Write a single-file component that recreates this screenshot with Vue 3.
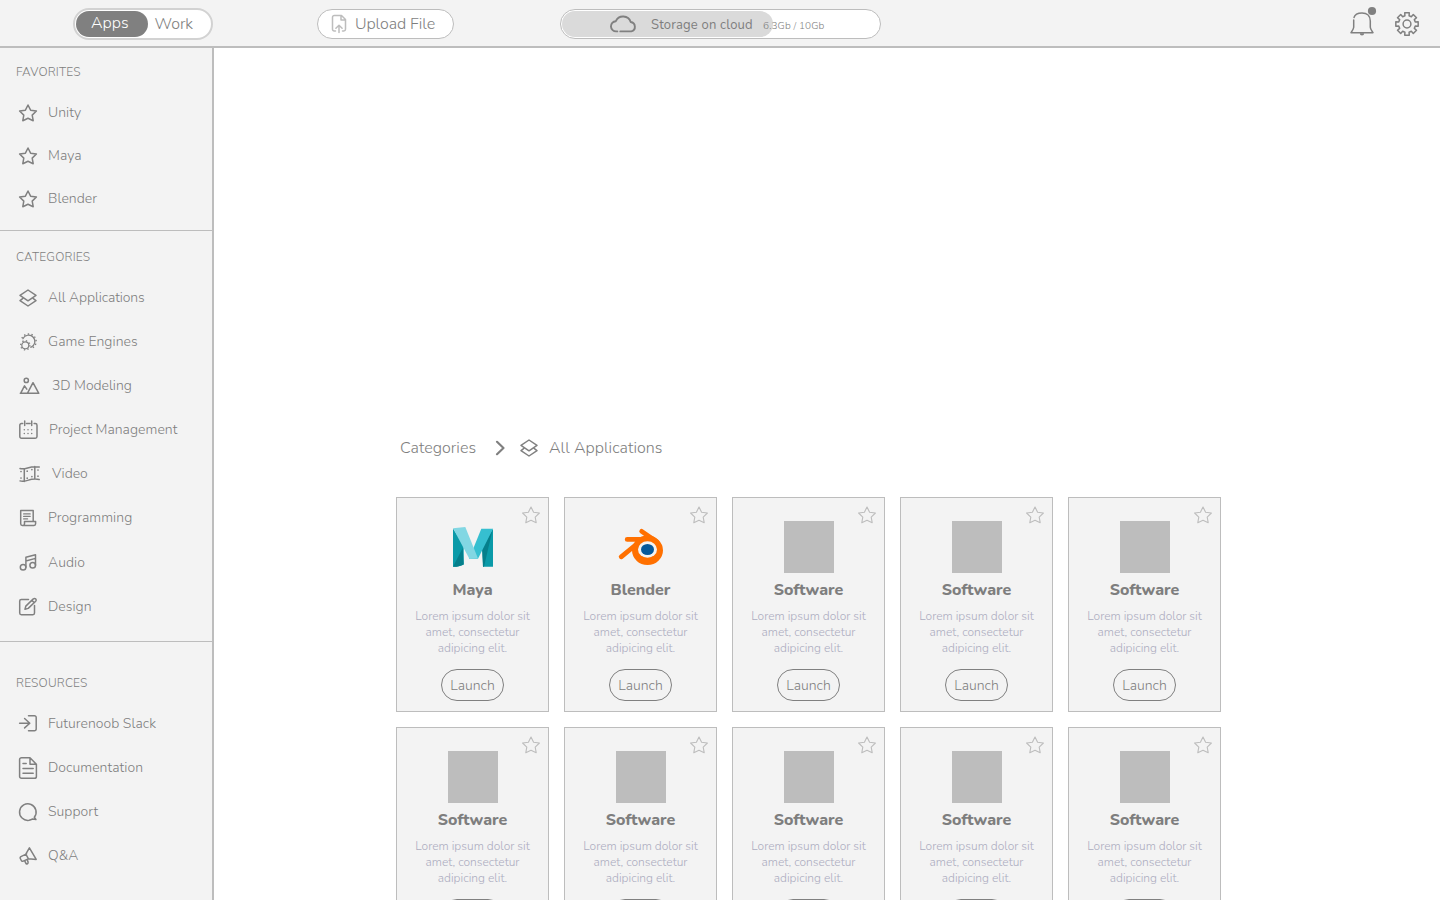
<script setup>
const star = '<path d="M12 5l2.600 5.200 5.800.8-4.200 4.100 1 5.600-5.200-2.400-5.200 2.400 1-5.600L3.600 11l5.800-.8z"/>'
const layers = '<path d="M12 4l8 5.400-8 5.400-8-5.400zM6.600 12.700L4 14.600 12 20l8-5.400-2.600-1.900"/>'

const sections = [
  {
    title: 'Favorites',
    key: 'fav',
    items: [
      { label: 'Unity', icon: star },
      { label: 'Maya', icon: star },
      { label: 'Blender', icon: star }
    ]
  },
  {
    title: 'Categories',
    key: 'cat',
    items: [
      { label: 'All Applications', icon: layers, cls: 'tight' },
      {
        label: 'Game Engines',
        icon: '<g stroke-width="1.200"><circle cx="9.300" cy="15.300" r="3.500"/><path d="M6.900 8.800a6.300 6.300 0 1 1 7.900 8.600"/></g><g stroke-linecap="butt" stroke-width="1.400"><circle cx="9.300" cy="15.300" r="4.600" stroke-dasharray="1.300 2.313"/><path d="M5.900 8.300a7.500 7.500 0 1 1 9.500 10.200" stroke-dasharray="1.400 2.300"/></g>'
      },
      {
        label: '3D Modeling',
        cls: 'wide',
        icon: '<circle cx="10.300" cy="6.400" r="2.100"/><path d="M4.600 19.300l3.900-7.500 2.300 3.400M11.400 19.300L17 8.700l5.800 10.600zM4.300 19.300h8"/>'
      },
      {
        label: 'Project Management',
        cls: 'mid',
        icon: '<path d="M6.700 5.600H5.500a1.700 1.700 0 0 0-1.700 1.700v11.200a1.700 1.700 0 0 0 1.700 1.700h13.800a1.700 1.700 0 0 0 1.700-1.700V7.300a1.700 1.700 0 0 0-1.700-1.700h-1.200M10.500 5.600h3.600M8.700 3v4.500M15.700 3v4.500"/><path d="M8.300 11.800h.01M12 11.800h.01M15.700 11.800h.01M8.300 15.500h.01M12 15.500h.01M15.700 15.500h.01" stroke-width="1.500"/>'
      },
      {
        label: 'Video',
        cls: 'wide',
        icon: '<path d="M4 6.500c6 2 9.500-3.500 19.200-1.400M4 18.900c6 2 9.500-3.500 19.200-1.400M8.300 7.200v12.300M18.800 4.600v12.500"/><path d="M5 9.500v.01M5 16v.01M11.200 9.200v.01M15.900 7.600v.01M11.200 16.200v.01M15.900 14.600v.01M22 8v.01M22 14.200v.01" stroke-width="1.700"/>'
      },
      {
        label: 'Programming',
        icon: '<path d="M17.200 15.300V4.600H4.700v13.200a1.600 1.600 0 0 0 1.600 1.600h11.700a1.600 1.600 0 0 0 1.600-1.600v-2.300H8.500v2.300a1.600 1.600 0 0 1-1.700 1.600"/><path d="M7.600 7.900h6.600M7.600 10.400h6.600M7.600 12.900h4" stroke-width="1.200"/>'
      },
      {
        label: 'Audio',
        cls: 'low',
        icon: '<circle cx="7.100" cy="17.300" r="2.800"/><circle cx="16.700" cy="15.200" r="2.800"/><path d="M9.900 17.300v-10l9.600-2.600v10.500M9.900 11l9.600-2.600"/>'
      },
      {
        label: 'Design',
        cls: 'low',
        icon: '<path d="M12.500 5.500H5.300A1.600 1.600 0 0 0 3.700 7.100v12a1.600 1.600 0 0 0 1.600 1.600h11.600a1.600 1.600 0 0 0 1.600-1.600v-7.600M9 15.300l.8-3.200 7.500-7.200a1.600 1.600 0 0 1 2.400 2.300l-7.500 7.200zM15.800 6.300l2.400 2.300"/>'
      }
    ]
  },
  {
    title: 'Resources',
    key: 'res',
    items: [
      {
        label: 'Futurenoob Slack',
        icon: '<path d="M12.500 3.700h6a1.700 1.700 0 0 1 1.700 1.700v11.700a1.700 1.700 0 0 1-1.700 1.700h-6M3.600 11.200h10.100M8.600 6.500l5.200 4.700-5.200 4.700"/>'
      },
      {
        label: 'Documentation',
        icon: '<path d="M14 1.700H5.500a1.900 1.900 0 0 0-1.900 1.900v16.800a1.900 1.900 0 0 0 1.900 1.900h13a1.900 1.900 0 0 0 1.900-1.900V8.300zM14 1.700v6.600h6.400M7 7.500h3.200M7 12.400h10.200M7 17.300h10.200"/>'
      },
      {
        label: 'Support',
        icon: '<path d="M18.300 17.300a8.300 8.300 0 1 0-5.200 3c1.600-.3 2.700-.9 3.600-1.400l3.200.6z"/>'
      },
      {
        label: 'Q&A',
        icon: '<path d="M13.400 3.800l6.800 11.600-7.700-.6-2.700-4.600zM10.600 9.900l-5.700 2.700a1.400 1.400 0 0 0-.6 1.900l1 2a1.400 1.400 0 0 0 1.900.6l5.500-2.300M8.600 16.600l1.200 2.500a1.200 1.200 0 0 0 2.200-1l-.7-2.600"/>'
      }
    ]
  }
]

const gearPath = (() => {
  const pts = []
  const teeth = 8
  for (let i = 0; i < teeth; i++) {
    const base = (i * 2 * Math.PI) / teeth - Math.PI / 2
    const corners = [[-0.25, 8.500], [-0.2, 11.400], [0.2, 11.400], [0.25, 8.500]]
    for (const [da, r] of corners) {
      pts.push(`${(13 + r * Math.cos(base + da)).toFixed(2)} ${(13 + r * Math.sin(base + da)).toFixed(2)}`)
    }
  }
  return `M${pts.join('L')}Z`
})()

const names = ['Maya', 'Blender', ...Array(8).fill('Software')]
const storage = { used: 6.3, total: 10, fill: '211px' }
</script>

<template>
  <div class="app">
    <header class="topbar">
      <div class="toggle">
        <span class="toggle-on">Apps</span>
        <span class="toggle-off">Work</span>
      </div>
      <button class="upload">
        <svg width="16" height="20" viewBox="0 0 16 20">
          <path d="M4.500 17H3.200A1.700 1.700 0 0 1 1.500 15.300V3.200A1.700 1.700 0 0 1 3.200 1.500h7.300l4 4v9.800a1.700 1.700 0 0 1-1.700 1.700h-1.300M10 1.700V6h4.300M8 18.500v-7M4.900 14.200L8 11.200l3.100 3" />
        </svg>
        <span>Upload File</span>
      </button>
      <div class="storage">
        <div class="storage-fill" :style="{ width: storage.fill }"></div>
        <svg class="cloud" width="28" height="20" viewBox="0 0 28 20">
          <path d="M8.300 17.400H7.300a5.100 5.100 0 0 1-.5-10.200 8 8 0 0 1 14.900.8 4.800 4.800 0 0 1 .6 9.400H11.300" />
        </svg>
        <span class="storage-label">Storage on cloud</span>
        <span class="storage-size">{{ storage.used }}Gb / {{ storage.total }}Gb</span>
      </div>
      <div class="actions">
        <svg width="28" height="32" viewBox="0 0 28 32">
          <path class="line" d="M6 11.500C6.800 8.300 10 6.900 14 6.900c5 0 8.300 3 8.300 8v6.400c0 1.800 1 3 2.700 5.400H3C4.700 24.300 5.700 23.100 5.700 21.300V14" />
          <path class="solid" d="M11.800 27.300h4.400a2.200 2.200 0 0 1-4.400 0z" />
          <circle class="solid" cx="24" cy="5" r="4.100" />
        </svg>
        <svg width="26" height="26" viewBox="0 0 26 26">
          <path class="line" :d="gearPath" />
          <circle class="line" cx="13" cy="13" r="3.900" />
        </svg>
      </div>
    </header>

    <div class="body">
      <aside class="sidebar">
        <section v-for="s in sections" :key="s.key" class="group" :class="s.key">
          <h2>{{ s.title }}</h2>
          <ul>
            <li v-for="item in s.items" :key="item.label" :class="item.cls">
              <svg width="24" height="24" viewBox="0 0 24 24" v-html="item.icon"></svg>
              <span>{{ item.label }}</span>
            </li>
          </ul>
        </section>
      </aside>

      <main class="main">
        <nav class="crumbs">
          <span class="crumb-root">Categories</span>
          <svg class="chevron" width="12" height="18" viewBox="0 0 12 18"><path d="M2 2.800L8.500 9 2 15.200" /></svg>
          <svg class="crumb-icon" width="24" height="24" viewBox="0 0 24 24" v-html="layers"></svg>
          <span>All Applications</span>
        </nav>
        <div class="grid">
          <article v-for="(name, i) in names" :key="i" class="card">
            <svg class="fav-star" width="24" height="24" viewBox="0 0 24 24" v-html="star"></svg>
            <svg v-if="name === 'Maya'" class="logo" width="50" height="52" viewBox="0 0 50 52">
              <path fill="#0a9aa8" d="M5 7.500V45.800C8 46 12 45.500 15.700 43.500V24z" />
              <path fill="#057f8b" d="M5 45.800L14.700 27 15.700 43.500C12 45.500 8 46 5 45.800z" />
              <path fill="#0a9aa8" d="M45 7.700V45.700H35L34.500 24z" />
              <path fill="#057f8b" d="M44.500 9L36 45.700H35L34 28z" />
              <path fill="#36bfd0" d="M33.300 7.700H45L30 37.800 21 38z" />
              <path fill="#82d7e3" d="M5 7.300L17.300 6 30 37.500 21.500 38z" />
            </svg>
            <svg v-else-if="name === 'Blender'" class="logo" width="50" height="52" viewBox="0 0 50 52">
              <path class="arms" d="M25.700 10.400L41 21M11.200 18.400H35M5.200 35.800L22 22" />
              <path fill="#ff7000" d="M20 19h22v10H16.500z" />
              <ellipse cx="31.500" cy="29.300" rx="15.500" ry="14.700" fill="#ff7000" />
              <ellipse cx="31.500" cy="28.500" rx="9.500" ry="8.300" fill="#f3f3f3" />
              <ellipse cx="31.500" cy="28.500" rx="6.500" ry="5.600" fill="#05599b" />
            </svg>
            <div v-else class="logo placeholder"></div>
            <h3>{{ name }}</h3>
            <p>Lorem ipsum dolor sit amet, consectetur adipicing elit.</p>
            <button class="launch">Launch</button>
          </article>
        </div>
      </main>
    </div>
  </div>
</template>

<style>
body {
  margin: 0;
  overflow: hidden;
}
</style>

<style scoped>
.app {
  width: 1440px;
  height: 900px;
  overflow: hidden;
  display: flex;
  flex-direction: column;
  background: #fff;
  color: #7e7e7e;
  font-family: Nunito, Lato, "Open Sans", sans-serif;
  font-size: 14px;
  font-weight: 350;
}
* {
  box-sizing: border-box;
}
svg {
  display: block;
  flex: none;
  overflow: visible;
  fill: none;
  stroke: #808080;
  stroke-width: 1.5;
  stroke-linecap: round;
  stroke-linejoin: round;
}
button {
  font-family: inherit;
  font-weight: inherit;
  color: inherit;
  padding: 0;
}
.topbar {
  height: 48px;
  flex: none;
  display: flex;
  align-items: flex-start;
  background: #f3f3f3;
  border-bottom: 2px solid #bdbdbd;
  font-size: 16px;
}
.toggle {
  margin: 8px 0 0 73px;
  width: 140px;
  height: 32px;
  padding: 1px;
  display: flex;
  border: 2px solid #d2d2d2;
  border-radius: 16px;
  background: #fff;
}
.toggle-on {
  width: 72px;
  height: 26px;
  line-height: 24px;
  padding-left: 15px;
  border-radius: 13px;
  background: #808080;
  color: #fff;
}
.toggle-off {
  line-height: 26px;
  padding-left: 6.500px;
}
.upload {
  margin: 9px 0 0 104px;
  width: 137px;
  height: 30px;
  display: flex;
  align-items: center;
  padding-left: 13px;
  border: 1px solid #bdbdbd;
  border-radius: 15px;
  background: #fff;
  font-size: 16px;
}
.upload svg {
  stroke: #bdbdbd;
  margin-right: 8px;
}
.upload span {
  line-height: 28px;
  letter-spacing: -0.08px;
}
.storage {
  position: relative;
  margin: 9px 0 0 106px;
  width: 321px;
  height: 30px;
  display: flex;
  align-items: center;
  padding-left: 48px;
  border: 1px solid #bdbdbd;
  border-radius: 15px;
  background: #fff;
}
.storage-fill {
  position: absolute;
  left: 1px;
  top: 1px;
  height: 26px;
  border-radius: 13px;
  background: #dadada;
}
.cloud {
  position: relative;
  stroke-width: 1.9;
}
.storage-label {
  position: relative;
  margin-left: 14px;
  width: 112px;
  font-size: 13px;
  font-weight: 400;
  line-height: 28px;
  padding-top: 1px;
  letter-spacing: 0.18px;
  white-space: nowrap;
}
.storage-size {
  position: relative;
  font-size: 10px;
  line-height: 28px;
  padding-top: 3px;
  letter-spacing: 0.13px;
  white-space: nowrap;
}
.actions {
  margin: 6px 20px 0 auto;
  display: flex;
  gap: 18px;
}
.actions svg:last-child {
  margin-top: 5px;
}
.line {
  stroke-width: 1.5;
}
.solid {
  fill: #808080;
  stroke: none;
}
.body {
  flex: 1;
  min-height: 0;
  display: flex;
}
.sidebar {
  width: 214px;
  flex: none;
  background: #f3f3f3;
  border-right: 2px solid #bdbdbd;
}
.group {
  border-bottom: 1px solid #bdbdbd;
}
.group h2 {
  margin: 0;
  padding-left: 16px;
  font-size: 12px;
  font-weight: 350;
  line-height: 20px;
  letter-spacing: 0.2px;
  text-transform: uppercase;
}
.group ul {
  list-style: none;
  margin: 0;
  padding: 0;
}
.group li {
  height: 44px;
  display: flex;
  align-items: center;
  padding-left: 16px;
}
.group li span {
  margin-left: 8px;
  line-height: 20px;
  letter-spacing: 0.04px;
}
.group li.mid span {
  margin-left: 9px;
}
.group li.wide span {
  margin-left: 12px;
  letter-spacing: -0.04px;
}
.group li.tight span {
  margin-left: 8px;
  letter-spacing: -0.13px;
}
.group li.low span {
  padding-top: 1px;
}
.fav li span {
  padding-top: 2px;
}
.fav {
  height: 183px;
  padding-top: 14px;
}
.fav ul {
  padding-top: 8px;
}
.fav li {
  height: 43.300px;
}
.cat {
  height: 411px;
  padding-top: 16px;
}
.cat ul {
  padding-top: 9px;
}
.res {
  border-bottom: 0;
  padding-top: 31px;
}
.res ul {
  padding-top: 9px;
}
.main {
  flex: 1;
  min-width: 0;
  overflow: hidden;
  padding: 388px 0 0 182px;
}
.crumbs {
  height: 24px;
  display: flex;
  align-items: center;
  padding-left: 4px;
  font-size: 16px;
  line-height: 24px;
  letter-spacing: 0.05px;
}
.crumb-root {
  width: 77px;
}
.chevron {
  margin-left: 18px;
  stroke-width: 2.2;
}
.crumb-icon {
  margin: 0 8px 0 10px;
}
.grid {
  margin-top: 37px;
  display: grid;
  grid-template-columns: repeat(5, 153px);
  gap: 15px;
}
.card {
  position: relative;
  height: 215px;
  padding-top: 23px;
  display: flex;
  flex-direction: column;
  align-items: center;
  border: 1px solid #bdbdbd;
  background: #f3f3f3;
}
.fav-star {
  position: absolute;
  top: 4px;
  right: 5px;
  stroke: #bdbdbd;
  stroke-width: 1.1;
}
.logo {
  width: 50px;
  height: 52px;
  flex: none;
  margin-left: 1px;
  stroke: none;
}
.arms {
  stroke: #ff7000;
  stroke-width: 4.8;
}
.placeholder {
  background: #bdbdbd;
}
.card h3 {
  margin: 6px 0 0;
  font-size: 16px;
  font-weight: 800;
  line-height: 22px;
}
.card p {
  margin: 7px 0 0;
  width: 126px;
  text-align: center;
  font-size: 12px;
  line-height: 16px;
  color: #acacbf;
}
.launch {
  margin-top: 13px;
  width: 63px;
  height: 32px;
  flex: none;
  border: 1px solid #808080;
  border-radius: 16px;
  background: transparent;
  font-size: 14px;
  line-height: 30px;
  padding-top: 1px;
}
</style>
